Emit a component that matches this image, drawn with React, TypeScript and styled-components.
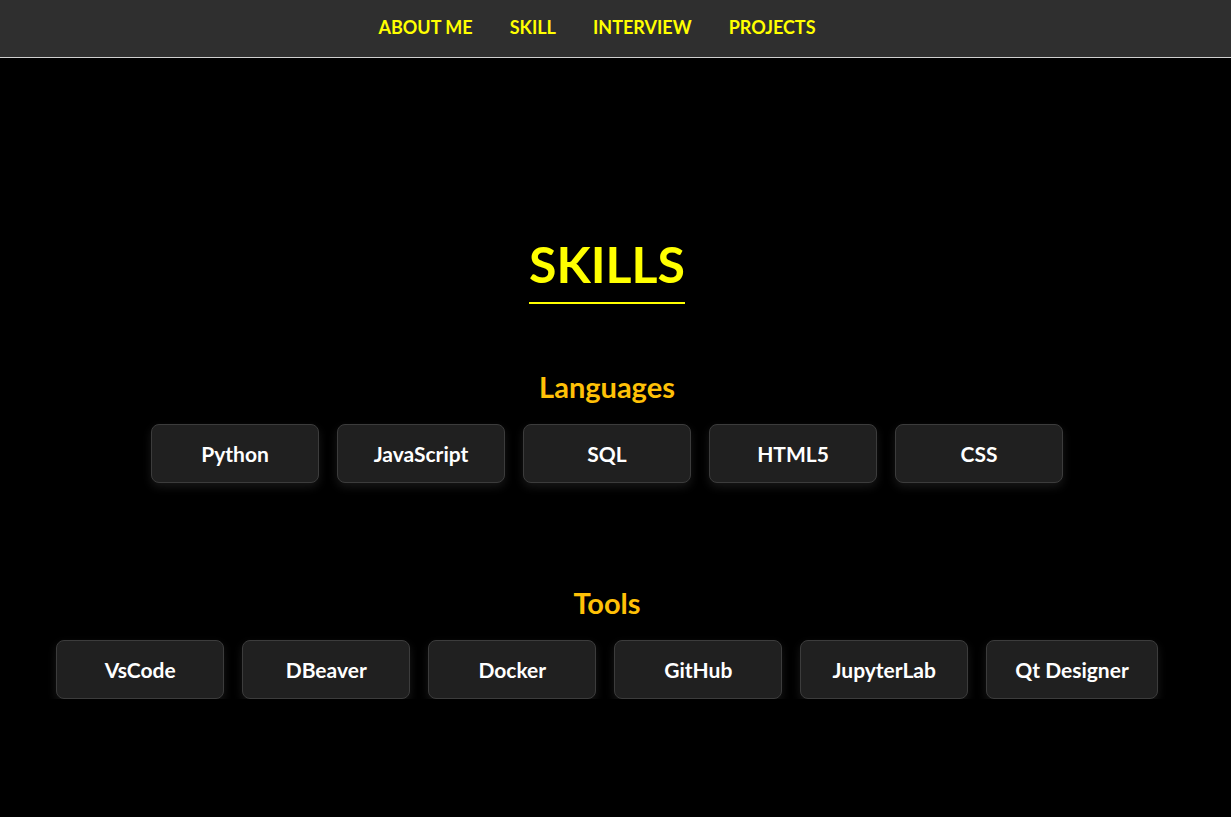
import React from 'react';
import styled, { createGlobalStyle } from 'styled-components';

const GlobalStyle = createGlobalStyle`
  html, body {
    margin: 0;
    padding: 0;
    background: #000;
    font-family: "Source Sans Pro", Lato, "Noto Sans", sans-serif;
  }
`;

const NavBar = styled.nav`
  box-sizing: border-box;
  height: 58px;
  padding-bottom: 4px;
  background-color: #2f2f2f;
  border-bottom: 1px solid #cfcfcf;
  display: flex;
  justify-content: center;
  align-items: center;
`;

const NavList = styled.ul`
  list-style: none;
  margin: 0;
  padding: 0;
  display: flex;
`;

const NavItem = styled.li`
  margin-right: 37px;
`;

const NavLink = styled.a`
  color: #ffff00;
  font-weight: 700;
  font-size: 18px;
  text-decoration: none;
  text-transform: uppercase;
`;

const Section = styled.section`
  padding: 176px 17px 0 0;
  display: flex;
  flex-direction: column;
  align-items: center;
`;

const Title = styled.h1`
  margin: 0;
  color: #ffff00;
  font-size: 50px;
  font-weight: 700;
  line-height: 1.2;
  padding-bottom: 8px;
  border-bottom: 2px solid #ffff00;
`;

const Group = styled.div<{ $first?: boolean }>`
  margin-top: ${props => (props.$first ? '66px' : '103px')};
  display: flex;
  flex-direction: column;
  align-items: center;
`;

const GroupTitle = styled.h2`
  margin: 0 0 19px;
  color: #ffc107;
  font-size: 29px;
  font-weight: 700;
  line-height: 1.2;
`;

const Chips = styled.div`
  display: flex;
  justify-content: center;
  gap: 18px;
`;

const Chip = styled.div`
  box-sizing: border-box;
  min-width: 168px;
  height: 59px;
  padding: 0 28px;
  display: flex;
  align-items: center;
  justify-content: center;
  background-color: #202020;
  border: 1px solid #3c3c3c;
  border-radius: 8px;
  color: #ffffff;
  font-size: 21px;
  font-weight: 700;
  box-shadow: 0 4px 10px rgba(40, 40, 40, 0.6);
`;

const navLinks = ['About me', 'Skill', 'Interview', 'Projects'];

const groups = [
  { title: 'Languages', items: ['Python', 'JavaScript', 'SQL', 'HTML5', 'CSS'] },
  { title: 'Tools', items: ['VsCode', 'DBeaver', 'Docker', 'GitHub', 'JupyterLab', 'Qt Designer'] },
];

const App: React.FC = () => {
  return (
    <>
      <GlobalStyle />
      <NavBar>
        <NavList>
          {navLinks.map(link => (
            <NavItem key={link}>
              <NavLink href="#">{link}</NavLink>
            </NavItem>
          ))}
        </NavList>
      </NavBar>
      <Section>
        <Title>SKILLS</Title>
        {groups.map((group, i) => (
          <Group key={group.title} $first={i === 0}>
            <GroupTitle>{group.title}</GroupTitle>
            <Chips>
              {group.items.map(item => (
                <Chip key={item}>{item}</Chip>
              ))}
            </Chips>
          </Group>
        ))}
      </Section>
    </>
  );
};

export default App;
